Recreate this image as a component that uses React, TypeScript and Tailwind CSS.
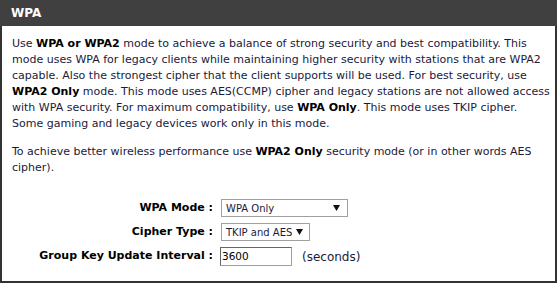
import React from "react";

function Select({ value, width }: { value: string; width: string }) {
  return (
    <div
      className={`flex h-[18px] items-center justify-between whitespace-nowrap border border-[#a0a0a0] bg-white pl-[4px] pr-[7px] text-[10px] text-[#1a1a3a] ${width}`}
    >
      <span>{value}</span>
      <svg width="7" height="6" viewBox="0 0 7 6" className="shrink-0 ml-[4px]">
        <path d="M0 0 H7 L3.5 6 Z" fill="#111" />
      </svg>
    </div>
  );
}

export default function App() {
  return (
    <div
      className="w-[557px] h-[283px] bg-white"
      style={{ fontFamily: '"DejaVu Sans", Verdana, sans-serif' }}
    >
      <div className="h-[26px] bg-[#404040] flex items-center pl-[11px]">
        <span className="text-white font-bold text-[12px]">WPA</span>
      </div>
      <div className="h-[257px] border-l-2 border-r-2 border-b-2 border-[#333]">
        <div className="pt-[10px] pl-[10px] pr-[4px] text-[11px] leading-[16px] text-[#1a1a3a] whitespace-nowrap">
          <p>
            Use <b className="text-black">WPA or WPA2</b> mode to achieve a balance of strong security and best compatibility. This
            <br />
            mode uses WPA for legacy clients while maintaining higher security with stations that are WPA2
            <br />
            capable. Also the strongest cipher that the client supports will be used. For best security, use
            <br />
            <b className="text-black">WPA2 Only</b> mode. This mode uses AES(CCMP) cipher and legacy stations are not allowed access
            <br />
            with WPA security. For maximum compatibility, use <b className="text-black">WPA Only</b>. This mode uses TKIP cipher.
            <br />
            Some gaming and legacy devices work only in this mode.
          </p>
          <p className="mt-[12px]">
            To achieve better wireless performance use <b className="text-black">WPA2 Only</b> security mode (or in other words AES
            <br />
            cipher).
          </p>
        </div>
        <div className="mt-[23px] flex flex-col gap-[6px]">
          <div className="flex items-center">
            <div className="w-[211px] text-right font-bold text-black text-[11px]">WPA Mode :</div>
            <div className="ml-[8px]">
              <Select value="WPA Only" width="w-[127px]" />
            </div>
          </div>
          <div className="flex items-center">
            <div className="w-[211px] text-right font-bold text-black text-[11px]">Cipher Type :</div>
            <div className="ml-[8px]">
              <Select value="TKIP and AES" width="w-[89px]" />
            </div>
          </div>
          <div className="flex items-center">
            <div className="w-[211px] text-right font-bold text-black text-[11px]">Group Key Update Interval :</div>
            <div className="ml-[7px] h-[19px] w-[72px] border border-[#a0a0a0] border-t-[#666] border-l-[#666] bg-white pl-[1px] text-[10.5px] leading-[17px] text-black">
              3600
            </div>
            <span className="ml-[10px] text-[#1a1a3a] text-[12px]">(seconds)</span>
          </div>
        </div>
      </div>
    </div>
  );
}
